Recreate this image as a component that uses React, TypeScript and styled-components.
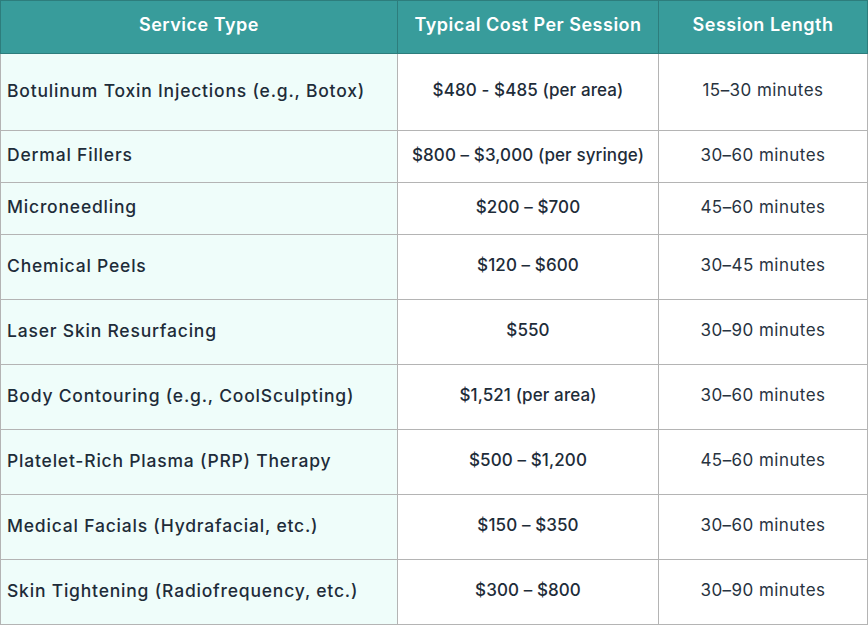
import styled, { createGlobalStyle } from "styled-components";

const GlobalStyle = createGlobalStyle`
  html, body {
    margin: 0;
    padding: 0;
    background: #ffffff;
  }
`;

const Table = styled.table`
  border-collapse: collapse;
  width: 867px;
  table-layout: fixed;
  font-family: Inter, "Noto Sans", sans-serif;
  color: #1e2c39;
`;

const HeadCell = styled.th<{ $w: number }>`
  width: ${(p) => p.$w}px;
  height: 53px;
  padding: 0 0 5px;
  background: #389c9b;
  color: #ffffff;
  font-size: 18px;
  font-weight: 600;
  letter-spacing: 0.5px;
  text-align: center;
  border: 1px solid #2d7d7c;
  box-sizing: border-box;
`;

const Row = styled.tr<{ $h: number }>`
  height: ${(p) => p.$h}px;
`;

const NameCell = styled.td`
  background: #effdfa;
  padding: 0 6px 4px;
  font-size: 17.5px;
  font-weight: 500;
  letter-spacing: 0.8px;
  text-align: left;
  border: 1px solid #b4b4b4;
`;

const CostCell = styled.td`
  padding: 0 4px 4px;
  font-size: 17px;
  font-weight: 500;
  letter-spacing: 0.1px;
  text-align: center;
  border: 1px solid #b4b4b4;
`;

const LengthCell = styled.td`
  padding: 0 4px 4px;
  font-size: 17px;
  font-weight: 400;
  letter-spacing: 0.45px;
  color: #28333f;
  text-align: center;
  border: 1px solid #b4b4b4;
`;

const rows = [
  { name: "Botulinum Toxin Injections (e.g., Botox)", cost: "$480 - $485 (per area)", len: "15–30 minutes", h: 77 },
  { name: "Dermal Fillers", cost: "$800 – $3,000 (per syringe)", len: "30–60 minutes", h: 52 },
  { name: "Microneedling", cost: "$200 – $700", len: "45–60 minutes", h: 52 },
  { name: "Chemical Peels", cost: "$120 – $600", len: "30–45 minutes", h: 65 },
  { name: "Laser Skin Resurfacing", cost: "$550", len: "30–90 minutes", h: 65 },
  { name: "Body Contouring (e.g., CoolSculpting)", cost: "$1,521 (per area)", len: "30–60 minutes", h: 65 },
  { name: "Platelet-Rich Plasma (PRP) Therapy", cost: "$500 – $1,200", len: "45–60 minutes", h: 65 },
  { name: "Medical Facials (Hydrafacial, etc.)", cost: "$150 – $350", len: "30–60 minutes", h: 65 },
  { name: "Skin Tightening (Radiofrequency, etc.)", cost: "$300 – $800", len: "30–90 minutes", h: 65 },
];

export default function App() {
  return (
    <>
      <GlobalStyle />
      <Table>
        <thead>
          <tr>
            <HeadCell $w={397}>Service Type</HeadCell>
            <HeadCell $w={261}>Typical Cost Per Session</HeadCell>
            <HeadCell $w={209}>Session Length</HeadCell>
          </tr>
        </thead>
        <tbody>
          {rows.map((r) => (
            <Row key={r.name} $h={r.h}>
              <NameCell>{r.name}</NameCell>
              <CostCell>{r.cost}</CostCell>
              <LengthCell>{r.len}</LengthCell>
            </Row>
          ))}
        </tbody>
      </Table>
    </>
  );
}
